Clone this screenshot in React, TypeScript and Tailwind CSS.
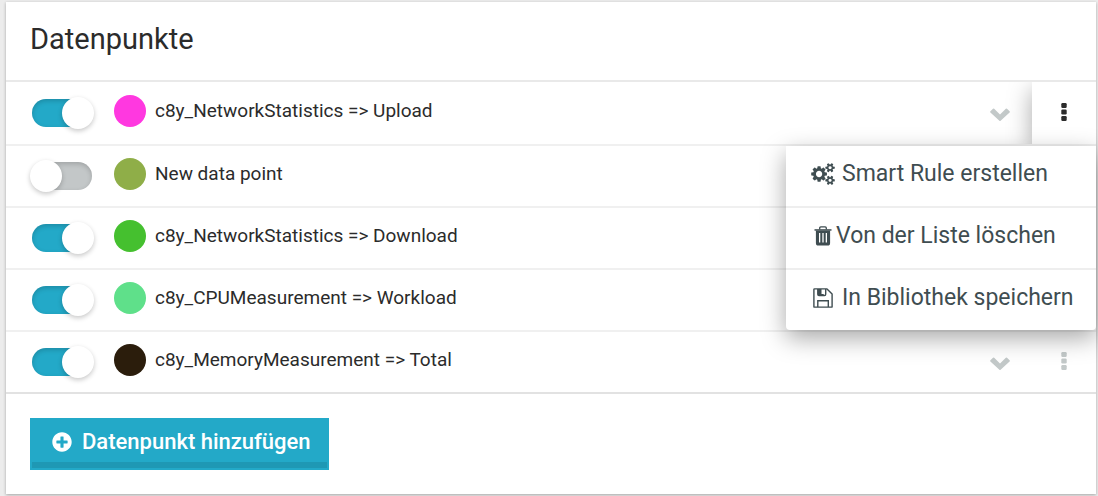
import { useState } from "react";
import { FaPlusCircle } from "react-icons/fa";

type DataPoint = { id: string; label: string; color: string; active: boolean };

const initialPoints: DataPoint[] = [
  { id: "upload", label: "c8y_NetworkStatistics => Upload", color: "bg-[#ff38e0]", active: true },
  { id: "new", label: "New data point", color: "bg-[#8fae48]", active: false },
  { id: "download", label: "c8y_NetworkStatistics => Download", color: "bg-[#45c02f]", active: true },
  { id: "workload", label: "c8y_CPUMeasurement => Workload", color: "bg-[#5fe08a]", active: true },
  { id: "total", label: "c8y_MemoryMeasurement => Total", color: "bg-[#2b1d0c]", active: true },
];

function CogsIcon() {
  return (
    <svg viewBox="0 0 1920 1792" className="h-[22px] w-6" fill="currentColor" aria-hidden="true">
      <path d="M896 896q0-106-75-181t-181-75-181 75-75 181 75 181 181 75 181-75 75-181zm768 512q0-52-38-90t-90-38-90 38-38 90q0 53 37.5 90.5t90.5 37.5 90.5-37.5 37.5-90.5zm0-1024q0-52-38-90t-90-38-90 38-38 90q0 53 37.5 90.5t90.5 37.5 90.5-37.5 37.5-90.5zm-384 421v185q0 10-7 19.5t-16 10.5l-155 24q-11 35-32 76 34 48 90 115 7 11 7 20 0 12-7 19-23 30-82.5 89.5t-78.5 59.5q-11 0-21-7l-115-90q-37 19-77 31-11 108-23 155-7 24-30 24h-186q-11 0-20-7.5t-10-17.5l-23-153q-34-10-75-31l-118 89q-7 7-20 7-11 0-21-8-144-133-144-160 0-9 7-19 10-14 41-53t47-61q-23-44-35-82l-152-24q-10-1-17-9.5t-7-19.5v-185q0-10 7-19.5t16-10.5l155-24q11-35 32-76-34-48-90-115-7-11-7-20 0-12 7-20 22-30 82-89t79-59q11 0 21 7l115 90q34-18 77-32 11-108 23-154 7-24 30-24h186q11 0 20 7.5t10 17.5l23 153q34 10 75 31l118-89q8-7 20-7 11 0 21 8 144 133 144 160 0 8-7 19-12 16-42 54t-45 60q23 48 34 82l152 23q10 2 17 10.5t7 19.5zm640 533v140q0 16-149 31-12 27-30 52 51 113 51 138 0 4-4 7-122 71-124 71-8 0-46-47t-52-68q-20 2-30 2t-30-2q-14 21-52 68t-46 47q-2 0-124-71-4-3-4-7 0-25 51-138-18-25-30-52-149-15-149-31v-140q0-16 149-31 13-29 30-52-51-113-51-138 0-4 4-7 4-2 35-20t59-34 30-16q8 0 46 46.5t52 67.5q20-2 30-2t30 2q51-71 92-112l6-2q4 0 124 70 4 3 4 7 0 25-51 138 17 23 30 52 149 15 149 31zm0-1024v140q0 16-149 31-12 27-30 52 51 113 51 138 0 4-4 7-122 71-124 71-8 0-46-47t-52-68q-20 2-30 2t-30-2q-14 21-52 68t-46 47q-2 0-124-71-4-3-4-7 0-25 51-138-18-25-30-52-149-15-149-31v-140q0-16 149-31 13-29 30-52-51-113-51-138 0-4 4-7 4-2 35-20t59-34 30-16q8 0 46 46.5t52 67.5q20-2 30-2t30 2q51-71 92-112l6-2q4 0 124 70 4 3 4 7 0 25-51 138 17 23 30 52 149 15 149 31z" />
    </svg>
  );
}

function ChevronIcon() {
  return (
    <svg viewBox="0 0 20 13" className="h-[13px] w-5" fill="currentColor" aria-hidden="true">
      <path d="M.4 3.3 3 .7q.6-.5 1.2 0L10 6.400 15.800.7q.6-.5 1.200 0l2.600 2.600q.5.6 0 1.200l-9 8.200q-.6.5-1.200 0l-9-8.200q-.5-.6 0-1.200z" />
    </svg>
  );
}

function DotsIcon() {
  return (
    <svg viewBox="0 0 6 18" className="h-[18px] w-1.5" fill="currentColor" aria-hidden="true">
      <rect x=".3" y="0" width="5.400" height="5" rx="1.200" />
      <rect x=".3" y="6.500" width="5.400" height="5" rx="1.200" />
      <rect x=".3" y="13" width="5.400" height="5" rx="1.200" />
    </svg>
  );
}

function TrashIcon() {
  return (
    <svg viewBox="0 0 18 20" className="h-5 w-[18px]" aria-hidden="true">
      <path d="M5.700 3.500V2Q5.700.9 6.800.9h4.400q1.100 0 1.100 1.100v1.500" fill="none" stroke="currentColor" strokeWidth="1.300" />
      <path d="M.5 3.200h17v1.500h-17z" fill="currentColor" />
      <path
        fillRule="evenodd"
        fill="currentColor"
        d="M1.900 4.500h14.200V17q0 2.600-2.400 2.600H4.300Q1.900 19.600 1.900 17zM5 7v9.600h1.300V7zm3.350 0v9.600h1.300V7zm3.350 0v9.600H13V7z"
      />
    </svg>
  );
}

function SaveIcon() {
  return (
    <svg viewBox="0 0 20 20" className="size-5" fill="none" stroke="currentColor" strokeWidth="1.400" aria-hidden="true">
      <path d="M1.500.9H14L19.100 6v13.100H.9V1.500Q.9.900 1.500.9z" strokeLinejoin="round" />
      <path d="M4.800 19v-6.200h10.500V19" />
      <path d="M4.800 1v5.200q0 1.300 1.200 1.300h5.500q1.200 0 1.200-1.300V1" />
      <path d="M4.800 1h3.700v5h2.200v1.500H5.300l-.5-.6z" fill="currentColor" stroke="none" />
    </svg>
  );
}

function Toggle({ id, checked, onChange }: { id: string; checked: boolean; onChange: () => void }) {
  return (
    <span className="relative flex h-8 w-16 shrink-0 items-center justify-center">
      <input
        id={id}
        type="checkbox"
        checked={checked}
        onChange={onChange}
        className="peer h-7 w-[60px] cursor-pointer appearance-none rounded-full bg-[#c3c7c8] shadow-[inset_0_2px_5px_rgba(0,0,0,0.18)] checked:bg-[#23a9c8]"
      />
      <span className="pointer-events-none absolute left-0 top-0 size-8 rounded-full bg-white shadow-[0_2px_5px_rgba(0,0,0,0.22)] peer-checked:left-auto peer-checked:right-0" />
    </span>
  );
}

function ActionMenu() {
  const item =
    "flex w-full items-center whitespace-nowrap border-b-2 border-[#eeeeee] pb-4 pl-6 pt-3 text-left first:pt-3 last:border-b-0";
  return (
    <div
      role="menu"
      className="absolute right-0 top-full z-10 mt-0.5 w-[310px] rounded-b bg-white text-[23px] leading-8 text-[#3f4d51] shadow-[0_8px_24px_rgba(0,0,0,0.35)]"
    >
      <button role="menuitem" className={item}>
        <span className="flex w-[26px] justify-center"><CogsIcon /></span>
        <span className="ml-1.5">Smart Rule erstellen</span>
      </button>
      <button role="menuitem" className={item}>
        <span className="flex w-[26px] justify-center"><TrashIcon /></span>
        <span>Von der Liste löschen</span>
      </button>
      <button role="menuitem" className={item}>
        <span className="flex w-[26px] justify-center"><SaveIcon /></span>
        <span className="ml-1.5">In Bibliothek speichern</span>
      </button>
    </div>
  );
}

export default function App() {
  const [points, setPoints] = useState(initialPoints);
  const [openId, setOpenId] = useState<string | null>("upload");

  const toggle = (id: string) =>
    setPoints((all) => all.map((p) => (p.id === id ? { ...p, active: !p.active } : p)));

  return (
    <main className="min-h-screen bg-[#ececec] pb-0.5 pl-1.5 pr-0.5 pt-0.5 font-['Roboto',sans-serif] text-[#2b2b2b]">
      <section className="bg-white shadow-[0_1px_3px_rgba(0,0,0,0.3)]">
        <header className="flex h-20 items-center border-b-2 border-[#e9e9e9] pb-1 pl-6">
          <h1 className="text-[29px] leading-9">Datenpunkte</h1>
        </header>
        <ul>
          {points.map((p) => {
            const open = openId === p.id;
            return (
              <li key={p.id} className="border-b-2 border-[#f0f0f0] last:border-[#e2e2e2]">
                <div className={`relative flex items-center pl-6 ${open ? "h-[62px]" : "h-[60px]"}`}>
                  <Toggle id={p.id} checked={p.active} onChange={() => toggle(p.id)} />
                  <label htmlFor={p.id} className="ml-5 flex grow items-center gap-[9px] pb-1 text-[19px] leading-8">
                    <span className={`size-8 shrink-0 rounded-full ${p.color}`} />
                    {p.label}
                  </label>
                  <div className="flex self-stretch overflow-hidden text-[#c3c9c9]">
                    <button aria-label="Details" className="flex w-16 items-center justify-center pt-0.5">
                      <ChevronIcon />
                    </button>
                    <button
                      aria-label="Aktionen"
                      aria-haspopup="menu"
                      aria-expanded={open}
                      onClick={() => setOpenId(open ? null : p.id)}
                      className={`flex w-16 items-center justify-center pb-0.5 ${open ? "bg-white text-[#2b2b2b] shadow-[0_8px_24px_rgba(0,0,0,0.35)]" : ""}`}
                    >
                      <DotsIcon />
                    </button>
                  </div>
                  {open && <ActionMenu />}
                </div>
              </li>
            );
          })}
        </ul>
        <footer className="p-6">
          <button className="flex h-[52px] items-center gap-2.5 border-2 border-[#23a9c8] bg-[#23a9c8] pb-1 pl-5 pr-4 text-[22px] font-medium leading-7 text-white shadow-[inset_0_-6px_0_#1f98b4]">
            <FaPlusCircle className="size-5" />
            Datenpunkt hinzufügen
          </button>
        </footer>
      </section>
    </main>
  );
}
